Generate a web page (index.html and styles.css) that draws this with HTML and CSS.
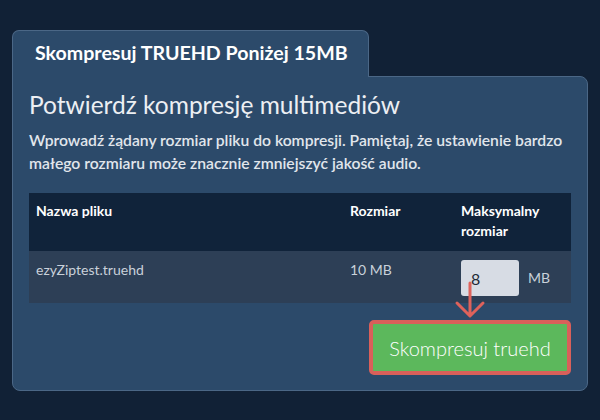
FILE: index.html
```html
<!DOCTYPE html>
<html lang="pl">
<head>
<meta charset="utf-8">
<title>Skompresuj TRUEHD</title>
<link rel="stylesheet" href="styles.css">
</head>
<body>
<div class="page">
  <div class="tab">Skompresuj TRUEHD Poniżej 15MB</div>
  <div class="card">
    <h2 class="title">Potwierdź kompresję multimediów</h2>
    <p class="desc">Wprowadź żądany rozmiar pliku do kompresji. Pamiętaj, że ustawienie bardzo małego rozmiaru może znacznie zmniejszyć jakość audio.</p>
    <table class="files">
      <colgroup>
        <col class="c-name">
        <col class="c-size">
        <col class="c-max">
      </colgroup>
      <thead>
        <tr>
          <th>Nazwa pliku</th>
          <th>Rozmiar</th>
          <th>Maksymalny rozmiar</th>
        </tr>
      </thead>
      <tbody>
        <tr>
          <td>ezyZiptest.truehd</td>
          <td>10 MB</td>
          <td>
            <div class="ctrl">
              <input class="max-input" type="text" value="8">
              <span class="unit">MB</span>
              <svg class="arrow" width="32" height="40" viewBox="0 0 32 40" aria-hidden="true">
                <path d="M16 3 V35 M3 23 L16 36 L29 23" fill="none" stroke="#df625b" stroke-width="3" stroke-linecap="round" stroke-linejoin="round"/>
              </svg>
            </div>
          </td>
        </tr>
      </tbody>
    </table>
    <div class="actions">
      <button class="btn" type="button">Skompresuj truehd</button>
    </div>
  </div>
</div>
</body>
</html>
```

FILE: styles.css
```css
html, body {
  margin: 0;
  padding: 0;
  background: #112136;
}

body {
  font-family: Lato, "Noto Sans", sans-serif;
  color: #e6ebf1;
}

.page {
  padding: 30px 12px 0 12px;
  width: 576px;
}

.tab {
  position: relative;
  box-sizing: border-box;
  width: 357px;
  height: 47px;
  margin-bottom: -1px;
  padding: 10px 0 0 22px;
  background: #2c4a6a;
  border: 1px solid #4b6786;
  border-bottom: none;
  border-radius: 7px 7px 0 0;
  color: #ffffff;
  font-size: 19.6px;
  font-weight: 700;
  line-height: 24px;
}

.card {
  box-sizing: border-box;
  width: 576px;
  background: #2c4a6a;
  border: 1px solid #4b6786;
  border-radius: 0 8px 8px 8px;
  padding: 13px 16px 15px 16px;
}

.title {
  margin: 0;
  font-size: 24.5px;
  font-weight: 400;
  line-height: 29px;
  color: #eceff3;
}

.desc {
  margin: 10px 0 18px 0;
  font-size: 15.7px;
  font-weight: 600;
  line-height: 23px;
  color: #e1e6ec;
}

.files {
  width: 542px;
  table-layout: fixed;
  border-collapse: collapse;
  border-spacing: 0;
}

.c-name { width: 314px; }
.c-size { width: 110px; }
.c-max { width: 118px; }

.files thead tr {
  background: #10233a;
}

.files th {
  text-align: left;
  vertical-align: top;
  padding: 8px 7px 10px 7px;
  font-size: 14px;
  font-weight: 700;
  line-height: 20px;
  color: #ffffff;
}

.files tbody tr {
  background: #2d3f56;
}

.files td {
  vertical-align: top;
  padding: 9px 7px 7px 7px;
  font-size: 14px;
  line-height: 20px;
  color: #c9d1da;
}

.files th:nth-child(3),
.files td:nth-child(3) {
  padding-left: 8px;
}

.ctrl {
  position: relative;
  display: flex;
  align-items: center;
}

.max-input {
  box-sizing: border-box;
  width: 58px;
  height: 36px;
  margin: 0;
  padding: 0 10px;
  border: none;
  border-radius: 3px;
  background: #d7dce4;
  color: #1f2a36;
  font-family: Lato, "Noto Sans", sans-serif;
  font-size: 16px;
  outline: none;
}

.unit {
  margin-left: 9px;
  font-size: 14px;
  line-height: 36px;
  color: #c9d1da;
}

.arrow {
  position: absolute;
  left: -7px;
  top: 20px;
}

.actions {
  display: flex;
  justify-content: flex-end;
  margin-top: 17px;
}

.btn {
  box-sizing: border-box;
  width: 202px;
  height: 55px;
  margin: 0;
  padding: 0;
  border: 4px solid #d9605a;
  border-radius: 5px;
  background: #5cb85c;
  color: #ffffff;
  font-family: Lato, "Noto Sans", sans-serif;
  font-size: 20px;
  font-weight: 300;
  cursor: pointer;
}
```
